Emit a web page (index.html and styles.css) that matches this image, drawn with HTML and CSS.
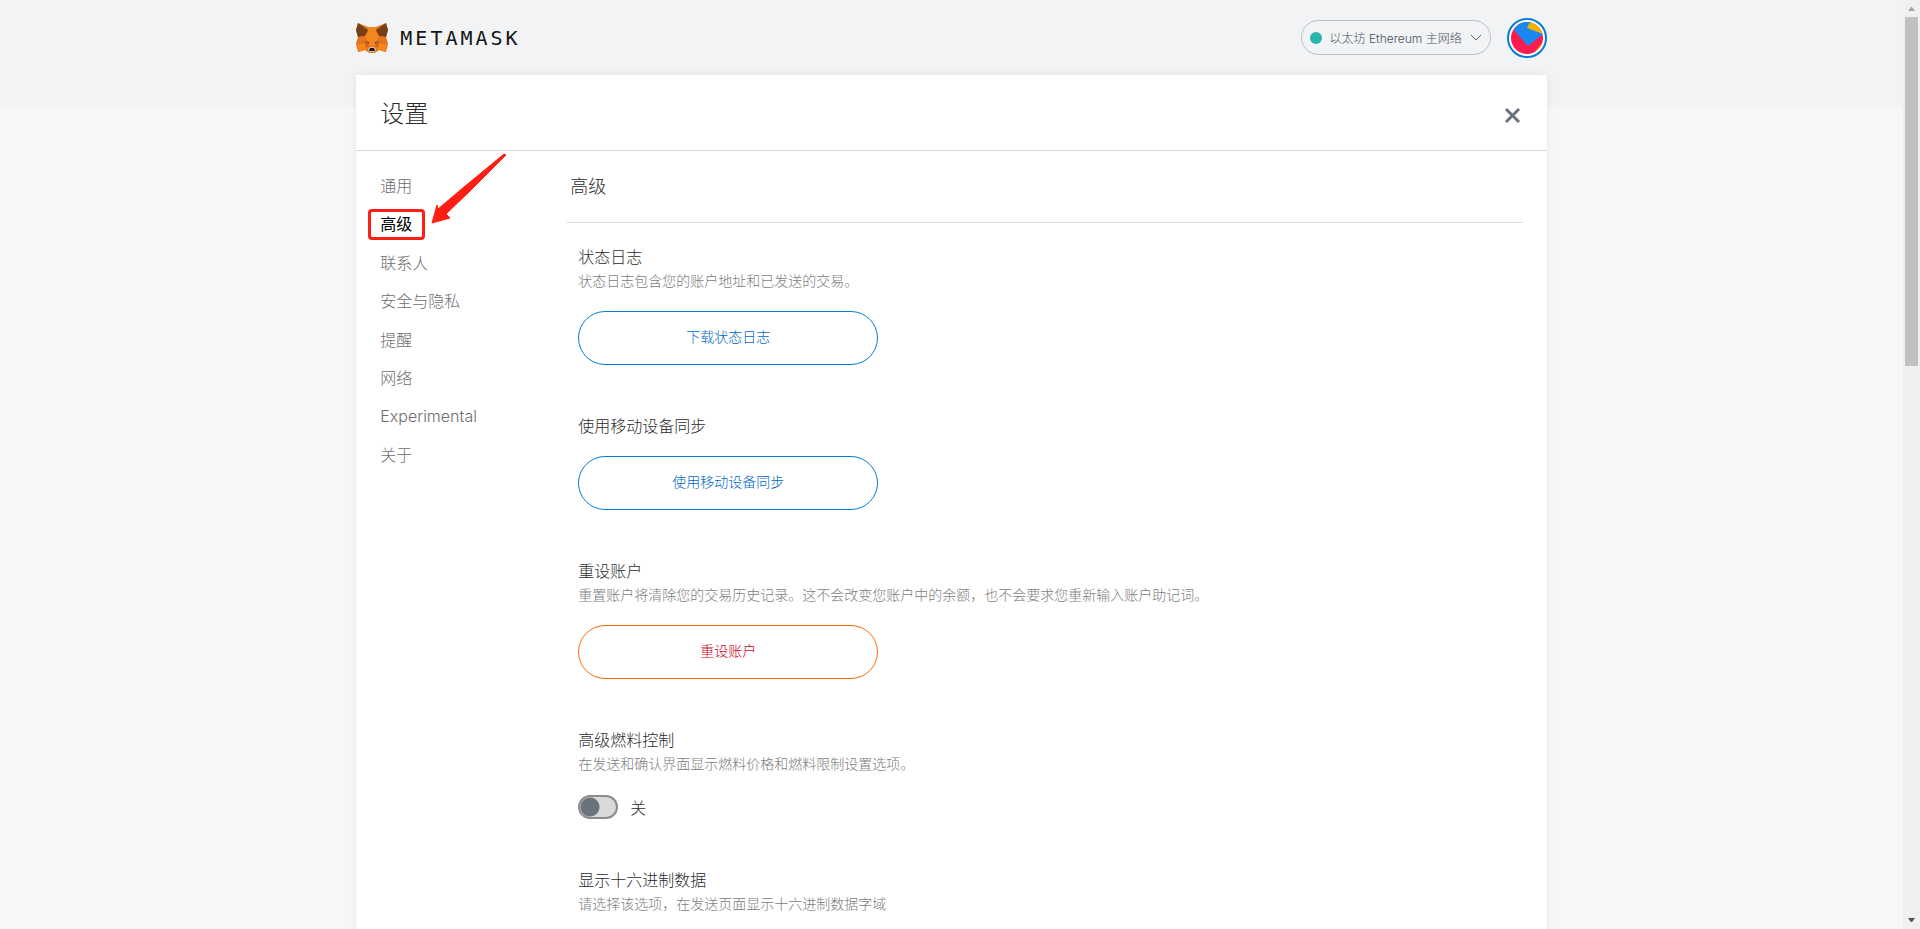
FILE: index.html
```html
<!DOCTYPE html>
<html lang="zh-CN">
<head>
  <meta charset="UTF-8">
  <meta name="viewport" content="width=device-width, initial-scale=1.0">
  <title>MetaMask</title>
  <link rel="stylesheet" href="styles.css">
</head>
<body>
  <div class="app">
    <header class="app-header">
      <a class="logo" href="#">
        <svg class="logo-fox" viewBox="0 0 32 30" aria-hidden="true">
          <path fill="#e2761b" d="M2 0l10 4h8l10-4 2 7-2 7 2 7-2 8-7-2-4 3h-6l-4-3-7 2-2-8 2-7-2-7z"/>
          <path fill="#f6851b" d="M12 4h8l2 10-2 9h-8l-2-9zM1 21h9l1 5-8 3zM31 21h-9l-1 5 8 3z"/>
          <path fill="#763d16" d="M2 0l10 7-3 6-7 1-2-7zM30 0L20 7l3 6 7 1 2-7z"/>
          <path fill="#e4751f" d="M2 14l7-1 1 6-9 2zM30 14l-7-1-1 6 9 2z"/>
          <path fill="#cd6116" d="M9 18l4 4-3 3zM23 18l-4 4 3 3z"/>
          <path fill="#5c4a45" d="M9 18l4 1v2zM23 18l-4 1v2z"/>
          <path fill="#d7c1b3" d="M12 26l2-2h4l2 2-1 3h-6z"/>
          <path fill="#161616" d="M14 25h4l1 3h-6z"/>
        </svg>
        <span class="logo-text">METAMASK</span>
      </a>
      <div class="account-menu">
        <button class="network" type="button">
          <span class="network-dot"></span>
          <span class="network-name">以太坊 Ethereum 主网络</span>
          <svg class="network-arrow" viewBox="0 0 12 8" aria-hidden="true"><path d="M1 1l5 5 5-5"/></svg>
        </button>
        <button class="avatar" type="button" aria-label="我的账户">
          <svg viewBox="0 0 32 32" aria-hidden="true">
            <clipPath id="round"><circle cx="16" cy="16" r="16"/></clipPath>
            <g clip-path="url(#round)">
              <path fill="#fa1c4f" d="M0 0h32v32H0z"/>
              <path fill="#f5b400" d="M32 20v12H22z"/>
              <path fill="#1888f2" d="M3 8L8 0h12l12 12-15 12z"/>
              <path fill="#f2b200" d="M19 0h13v12L16 6z"/>
            </g>
          </svg>
        </button>
      </div>
    </header>

    <main class="settings">
      <div class="settings-header">
        <h1>设置</h1>
        <button class="close" type="button" aria-label="关闭">
          <svg viewBox="0 0 20 20" aria-hidden="true"><path d="M3 4l13 13M16 4L3 17"/></svg>
        </button>
      </div>
      <div class="settings-body">
        <nav class="tabs">
          <a href="#">通用</a>
          <a href="#" class="active">高级</a>
          <a href="#">联系人</a>
          <a href="#">安全与隐私</a>
          <a href="#">提醒</a>
          <a href="#">网络</a>
          <a href="#">Experimental</a>
          <a href="#">关于</a>
          <svg class="arrow" viewBox="0 0 76 72" aria-hidden="true"><path d="M1 70l5-18 1 4 26-22L73 1l2 1-37 37-23 22 4 4z"/></svg>
        </nav>
        <div class="content">
          <h2>高级</h2>
          <div class="rows">
            <section class="row">
              <h3>状态日志</h3>
              <p>状态日志包含您的账户地址和已发送的交易。</p>
              <button class="btn" type="button">下载状态日志</button>
            </section>
            <section class="row">
              <h3>使用移动设备同步</h3>
              <button class="btn" type="button">使用移动设备同步</button>
            </section>
            <section class="row">
              <h3>重设账户</h3>
              <p>重置账户将清除您的交易历史记录。这不会改变您账户中的余额，也不会要求您重新输入账户助记词。</p>
              <button class="btn btn-warning" type="button">重设账户</button>
            </section>
            <section class="row">
              <h3>高级燃料控制</h3>
              <p>在发送和确认界面显示燃料价格和燃料限制设置选项。</p>
              <label class="toggle"><input type="checkbox"><span>关</span></label>
            </section>
            <section class="row">
              <h3>显示十六进制数据</h3>
              <p>请选择该选项，在发送页面显示十六进制数据字域</p>
            </section>
          </div>
        </div>
      </div>
    </main>
  </div>

  <div class="scrollbar">
    <svg viewBox="0 0 7 4" aria-hidden="true"><path fill="#a3a3a3" d="M0 4l3-4h1l3 4z"/></svg>
    <div class="scrollbar-track"><div class="scrollbar-thumb"></div></div>
    <svg viewBox="0 0 7 4" aria-hidden="true"><path fill="#505050" d="M0 0l3 4h1l3-4z"/></svg>
  </div>
</body>
</html>
```
FILE: styles.css
```css
* {
  box-sizing: border-box;
}
body {
  display: flex;
  height: 100vh;
  margin: 0;
  overflow: hidden;
  font-family: Inter, "Noto Sans CJK SC", sans-serif;
  font-size: 16px;
  font-weight: 300;
  color: #2b2b2b;
  background: #f7f7f7;
}
h1, h2, h3, p {
  margin: 0;
  font-weight: inherit;
}
button {
  padding: 0;
  font-family: inherit;
  font-weight: inherit;
  background: none;
  border: 0;
  cursor: pointer;
}
a {
  color: inherit;
  text-decoration: none;
}

/* top bar */
.app {
  display: flex;
  flex: 1;
  flex-direction: column;
  align-items: center;
  background: linear-gradient(#f2f3f4 107px, #f7f7f7 107px);
}
.app-header {
  display: flex;
  flex: none;
  justify-content: space-between;
  align-items: center;
  width: 62vw;
  height: 75px;
}
.logo {
  display: flex;
  align-items: center;
  gap: 12px;
}
.logo-fox {
  width: 32px;
  height: 30px;
}
.logo-text {
  font-family: "DejaVu Sans Mono", monospace;
  font-size: 20px;
  font-weight: 400;
  letter-spacing: 3px;
  color: #161616;
}
.account-menu {
  display: flex;
  align-items: center;
  gap: 16px;
}
.network {
  display: flex;
  align-items: center;
  gap: 8px;
  height: 35px;
  padding: 0 8px;
  font-size: 12px;
  color: #4a525b;
  border: 1px solid #bbc0c5;
  border-radius: 18px;
}
.network-dot {
  width: 12px;
  height: 12px;
  background: #29b6af;
  border-radius: 50%;
}
.network-arrow {
  width: 12px;
  height: 8px;
  fill: none;
  stroke: #5b6067;
}
.avatar {
  width: 40px;
  height: 40px;
  padding: 2px;
  background: #fff;
  border: 2px solid #037dd6;
  border-radius: 50%;
}
.avatar svg {
  display: block;
}

/* settings panel */
.settings {
  display: flex;
  flex: 1;
  flex-direction: column;
  width: 62vw;
  background: #fff;
  box-shadow: 0 0 7px rgba(0, 0, 0, 0.08);
}
.settings-header {
  display: flex;
  justify-content: space-between;
  align-items: center;
  height: 76px;
  padding: 0 24px 2px;
  border-bottom: 1px solid #d8d8d8;
}
h1 {
  font-size: 24px;
}
.close {
  width: 20px;
  height: 20px;
  margin-top: 6px;
}
.close svg {
  display: block;
  width: 20px;
  fill: none;
  stroke: #6a737d;
  stroke-width: 3;
}
.settings-body {
  display: flex;
}
.tabs {
  position: relative;
  display: flex;
  flex-direction: column;
  width: 210px;
  padding: 16px 24px;
  color: #6e6e70;
}
.tabs a {
  padding: 8px 0;
  line-height: 1.4;
}
.tabs .active {
  position: relative;
  align-self: flex-start;
  font-weight: 400;
  color: #000;
}
.active::after {
  content: "";
  position: absolute;
  inset: 4px -13px 4px -12px;
  border: 3px solid #ff1e14;
  border-radius: 4px;
}
.arrow {
  position: absolute;
  top: 2px;
  left: 75px;
  width: 76px;
  height: 72px;
  fill: #ff1e14;
  stroke: #ff1e14;
}
.content {
  flex: 1;
  padding-right: 24px;
}
h2 {
  height: 72px;
  padding-left: 4px;
  font-size: 18px;
  line-height: 72px;
  border-bottom: 1px solid #dedede;
}
.rows {
  display: flex;
  flex-direction: column;
  gap: 49px;
  padding: 22px 12px;
}
h3 {
  font-size: 16px;
  line-height: 24px;
}
.row p {
  font-size: 14px;
  line-height: 24px;
  color: #7c7c7c;
}
.btn {
  display: block;
  width: 300px;
  height: 54px;
  margin-top: 18px;
  padding-bottom: 5px;
  font-size: 14px;
  color: #0068c4;
  border: 1px solid #037dd6;
  border-radius: 27px;
}
.btn-warning {
  color: #c80018;
  border-color: #f66a0a;
}
.toggle {
  display: flex;
  align-items: center;
  gap: 12px;
  height: 24px;
  margin-top: 19px;
}
.toggle input {
  appearance: none;
  width: 40px;
  height: 24px;
  margin: 0;
  background: radial-gradient(circle at 10px 50%, #6a737d 9px, #d9d9d9 10px);
  border: 2px solid #8c8c8c;
  border-radius: 12px;
}

/* scrollbar */
.scrollbar {
  display: flex;
  flex-direction: column;
  align-items: center;
  gap: 6px;
  width: 17px;
  padding: 7px 0;
  background: #f0f0f0;
}
.scrollbar svg {
  flex: none;
  width: 7px;
  height: 4px;
}
.scrollbar-track {
  flex: 1;
}
.scrollbar-thumb {
  width: 13px;
  height: 39%;
  background: #c1c1c1;
}
```
